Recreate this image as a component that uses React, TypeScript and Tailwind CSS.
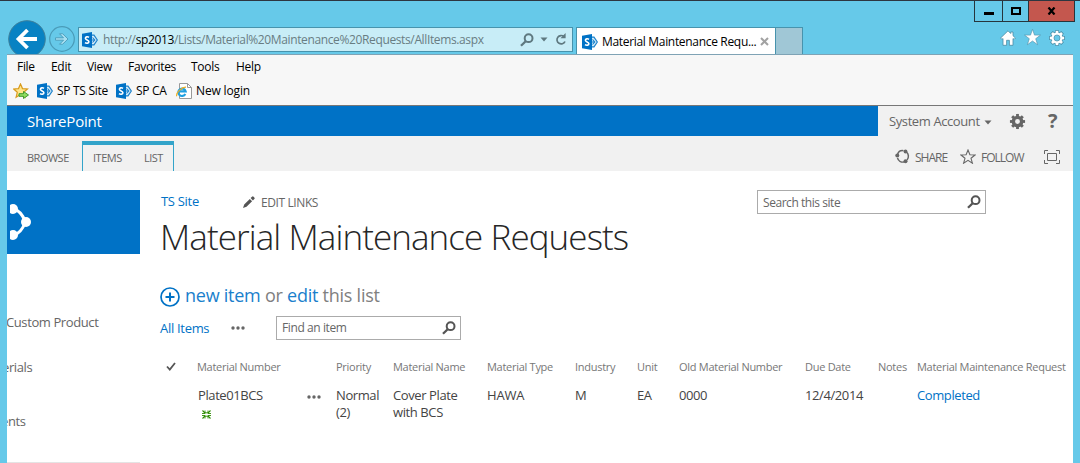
import React from "react";

function SharePointIcon() {
  return (
    <svg width="16" height="16" viewBox="0 0 16 16" className="shrink-0">
      <path d="M9 3.200h3L15.300 8 12 12.800H9z" fill="#d6ecf8" stroke="#1b82cc" strokeWidth="1.200" />
      <path d="M8 8h5M10.500 5.500 12.800 8l-2.300 2.500" fill="none" stroke="#1b82cc" strokeWidth="1.100" />
      <path d="M0 1.800 10 0v16L0 14.200z" fill="#0072c6" />
      <path d="M7 5.400C5.700 4.500 3.400 4.600 3.400 6.200c0 1.900 3.500 1.500 3.500 3.500 0 1.700-2.500 1.900-3.900.9" fill="none" stroke="#fff" strokeWidth="1.600" />
    </svg>
  );
}

function SearchIcon() {
  return (
    <svg width="14" height="14" viewBox="0 0 14 14" className="shrink-0">
      <circle cx="8.600" cy="5.200" r="3.900" fill="none" stroke="currentColor" strokeWidth="2" />
      <path d="M5.700 8.200 1 12.800" stroke="currentColor" strokeWidth="2.300" />
    </svg>
  );
}

function Gear({ size, hole, outline }: { size: number; hole: number; outline?: string }) {
  const angles = [0, 45, 90, 135, 180, 225, 270, 315];
  return (
    <svg width={size} height={size} viewBox="0 0 18 18" className="shrink-0">
      {outline && (
        <g fill={outline} stroke={outline} strokeWidth="1.600">
          {angles.map((a) => (
            <path key={a} d="M7.600 1h2.800v4H7.600z" transform={`rotate(${a} 9 9)`} />
          ))}
          <circle cx="9" cy="9" r="6.200" />
        </g>
      )}
      {angles.map((a) => (
        <path key={a} d="M7.500 1h3v4h-3z" fill="currentColor" transform={`rotate(${a} 9 9)`} />
      ))}
      <circle cx="9" cy="9" r={(hole + 6.2) / 2} fill={outline ? "#66c9e9" : "none"} stroke="currentColor" strokeWidth={6.2 - hole} />
      {outline && <circle cx="9" cy="9" r={hole} fill="none" stroke={outline} strokeWidth="0.800" />}
    </svg>
  );
}

function Dots() {
  return (
    <svg width="14" height="4" viewBox="0 0 14 4" fill="#666" className="shrink-0">
      <circle cx="2" cy="2" r="1.700" />
      <circle cx="7" cy="2" r="1.700" />
      <circle cx="12" cy="2" r="1.700" />
    </svg>
  );
}

function BrowserBar() {
  return (
    <header className="flex h-[54px] shrink-0 items-start overflow-hidden border-t border-[#2d3640]">
      <svg width="70" height="54" viewBox="0 1 70 54" className="ml-[6px] shrink-0">
        <circle cx="21" cy="39" r="18.300" fill="#0882c3" stroke="#3c7f9b" strokeWidth="1" />
        <path d="M31 39H13M21.500 30 12.500 39l9 9" fill="none" stroke="#fff" strokeWidth="3.800" />
        <circle cx="56" cy="39" r="12.300" fill="none" stroke="#4a9bb8" strokeWidth="1.200" />
        <path d="M49.500 37.800h8l-4-4h3.200l5.300 5.200-5.300 5.200h-3.200l4-4h-8z" fill="#a8e0f2" stroke="#4a9bb8" strokeWidth="0.900" />
      </svg>
      <div className="mt-[26px] ml-[2px] flex h-[25px] w-[495px] shrink-0 items-center border border-[#4793ad] bg-[#c8edf7] pr-[5px] pl-[3px] text-[#5f7980]">
        <SharePointIcon />
        <span className="mt-px ml-[5px] text-[12px] tracking-[-0.37px] whitespace-nowrap text-[#687d83]">
          http://<span className="text-black">sp2013</span>/Lists/Material%20Maintenance%20Requests/AllItems.aspx
        </span>
        <span className="ml-auto flex items-center">
          <SearchIcon />
          <svg width="8" height="5" viewBox="0 0 8 5" className="ml-[6px]"><path d="M.5.500h7L4 4.500z" fill="currentColor" /></svg>
          <svg width="12" height="13" viewBox="0 0 12 13" className="ml-[7px]">
            <path d="M9 3.600A4.200 4.200 0 1 0 10 8.500" fill="none" stroke="currentColor" strokeWidth="1.700" />
            <path d="M10.600 0v5.200H5.500z" fill="currentColor" />
          </svg>
        </span>
      </div>
      <div className="mt-[26px] ml-[3px] flex h-[28px] w-[200px] shrink-0 items-center border border-b-0 border-[#4793ad] bg-white pr-[6px] pl-[5px]">
        <SharePointIcon />
        <span className="ml-[4px] text-[12px] tracking-[-0.32px] whitespace-nowrap text-black">Material Maintenance Requ...</span>
        <svg width="9" height="9" viewBox="0 0 9 9" className="ml-auto"><path d="m1 1 7 7M8 1 1 8" stroke="#a2a2a2" strokeWidth="2" /></svg>
      </div>
      <div className="mt-[26px] h-[28px] w-[27px] shrink-0 border border-b-0 border-l-0 border-[#4793ad] bg-[#a0c7d6]" />
      <div className="ml-auto flex flex-col items-end pr-[5px]">
        <div className="flex h-[21px] w-[101px] border border-t-0 border-[#26353c]">
          <div className="flex w-[28px] items-center justify-center border-r border-[#26353c]"><span className="mt-[5px] h-[3px] w-[10px] bg-black" /></div>
          <div className="flex w-[26px] items-center justify-center border-r border-[#26353c]"><span className="h-[8px] w-[10px] border-2 border-black" /></div>
          <div className="flex flex-1 items-center justify-center bg-[#c4574e]">
            <svg width="9" height="8" viewBox="0 0 9 8"><path d="m1.500.5 6 7m0-7-6 7" stroke="#000" strokeWidth="2.200" /></svg>
          </div>
        </div>
        <div className="mt-[7px] mr-[10px] flex items-center gap-[8px] text-white">
          <svg width="16" height="16" viewBox="0 0 16 16">
            <path d="M8 .8.600 8l1.400 1.400 1-.9V15.300h3.600v-5h2.800v5H13V8.500l1 .9L15.400 8 13 5.700V2h-2.300v1.500z" fill="#fff" stroke="#4a8ca5" strokeWidth=".8" />
          </svg>
          <svg width="17" height="17" viewBox="0 0 17 17">
            <path d="m8.500.3 2 5.800h6l-4.800 3.600 1.900 6-5.100-3.700-5.100 3.700 1.900-6L.5 6.100h6z" fill="#fff" stroke="#4a8ca5" strokeWidth=".6" />
          </svg>
          <Gear size={16} hole={3.400} outline="#4a8ca5" />
        </div>
      </div>
    </header>
  );
}

function Toolbars() {
  return (
    <div className="h-[52px] shrink-0 border-t border-b border-t-[#7fa3b5] border-b-[#777] bg-[#f7f7f7] text-[12px] text-black">
      <nav className="flex h-[23px] items-center pl-[10px] tracking-[-0.3px] whitespace-nowrap">
        <span className="w-[34px]">File</span>
        <span className="w-[36px]">Edit</span>
        <span className="w-[41px]">View</span>
        <span className="w-[63px]">Favorites</span>
        <span className="w-[45px]">Tools</span>
        <span>Help</span>
      </nav>
      <div className="flex h-[26px] items-center pl-[6px] tracking-[-0.3px] whitespace-nowrap">
        <svg width="16" height="16" viewBox="0 0 16 16" className="mr-[8px] shrink-0">
          <path d="m7.500 1 2 4.600 5 .4-3.800 3.300 1.200 5-4.400-2.700-4.400 2.700 1.200-5L.7 6l4.800-.4z" fill="#ffe58a" stroke="#d89a1c" strokeWidth="1.200" />
          <path d="M6 10.700h4.500V8.500l5 3.500-5 3.500v-2.200H6z" fill="#8fdc60" stroke="#3f9a2d" strokeWidth="1" />
        </svg>
        <SharePointIcon />
        <span className="ml-[4px] w-[59px]">SP TS Site</span>
        <SharePointIcon />
        <span className="ml-[4px] w-[40px]">SP CA</span>
        <svg width="16" height="16" viewBox="0 0 16 16" className="shrink-0">
          <path d="M3.500.5h8l4 4v11h-12z" fill="#fff" stroke="#999" />
          <path d="M11.500.5v4h4" fill="none" stroke="#999" />
          <path d="M9.300 11A3.700 3.700 0 1 1 9.600 8.300H3" fill="none" stroke="#1fa0e0" strokeWidth="2.200" />
          <path d="M.8 13.300C-.5 10 6 4 10 4.200" fill="none" stroke="#f0b020" strokeWidth="1.200" />
        </svg>
        <span className="ml-[4px] tracking-[-0.15px]">New login</span>
      </div>
    </div>
  );
}

function SuiteBar() {
  return (
    <div className="flex h-[30px] shrink-0 bg-[#f1f1f1] text-[#666]">
      <div className="flex w-[871px] items-center bg-[#0072c6] pl-[20px] text-[15px] tracking-[-0.2px] text-white">SharePoint</div>
      <div className="flex flex-1 items-center pl-[11px]">
        <span className="mt-[2px] w-[95px] text-[13px] tracking-[-0.4px] whitespace-nowrap">System Account</span>
        <svg width="8" height="5" viewBox="0 0 8 5" className="mt-[2px] shrink-0"><path d="M.5.500h7L4 4.500z" fill="#666" /></svg>
        <span className="ml-[17px]"><Gear size={17} hole={2.600} /></span>
        <span className="ml-[22px] text-[20px] leading-none font-bold">?</span>
      </div>
    </div>
  );
}

function Ribbon() {
  return (
    <div className="flex h-[35px] shrink-0 items-end bg-[#f1f1f1] text-[11px] whitespace-nowrap text-[#666]">
      <div className="flex h-[26px] w-[75px] items-center pl-[20px] tracking-[-0.5px]">BROWSE</div>
      <div className="flex h-[30px] w-[92px] items-center border-x border-t-4 border-[#33a4ca] pl-[10px] tracking-[-0.5px]">
        <span className="w-[51px]">ITEMS</span>
        <span>LIST</span>
      </div>
      <div className="ml-auto flex h-[29px] items-center pr-[13px] text-[12px] tracking-[-1px]">
        <svg width="15" height="15" viewBox="0 0 15 15" className="mr-[5px]">
          <g fill="none" stroke="#666" strokeWidth="1.500">
            <path d="M2.500 5.500A5.500 5.500 0 0 1 8.500 1.700" />
            <path d="M11.500 3A5.700 5.700 0 0 1 12 11" />
            <path d="M9 13a5.700 5.700 0 0 1-6.500-4" />
          </g>
          <circle cx="2.300" cy="6.500" r="2" fill="#666" />
          <circle cx="10.500" cy="2.500" r="1.900" fill="#666" />
          <circle cx="10.500" cy="12.300" r="2" fill="#666" />
        </svg>
        <span className="mt-[2px] w-[45px]">SHARE</span>
        <svg width="16" height="15" viewBox="0 0 16 15" className="mr-[5px]">
          <path d="m8 1 1.900 4.700 5.100.3-4 3.300 1.400 4.900L8 11.400l-4.400 2.800L5 9.300 1 6l5.100-.3z" fill="none" stroke="#666" strokeWidth="1.100" />
        </svg>
        <span className="mt-[2px] w-[63px]">FOLLOW</span>
        <svg width="16" height="14" viewBox="0 0 16 14" fill="none" stroke="#666">
          <path d="M.5 4V.5H4M12 .5h3.500V4M15.500 10v3.500H12M4 13.500H.5V10M3.500 3.500h9v7h-9z" />
        </svg>
      </div>
    </div>
  );
}

function Sidebar() {
  return (
    <aside className="w-[133px] shrink-0 overflow-hidden pt-[19px] text-[13px] tracking-[-0.4px] whitespace-nowrap text-[#666]">
      <div className="flex h-[64px] items-center bg-[#0072c6] pl-[3px]">
        <svg width="22" height="38" viewBox="0 0 22 38" fill="#fff">
          <circle cx="3" cy="6" r="5" />
          <circle cx="16" cy="19" r="5" />
          <circle cx="3" cy="32" r="5" />
          <path d="M4 6q7 2 11 12M4 32q7-2 11-12" fill="none" stroke="#fff" strokeWidth="3" />
        </svg>
      </div>
      <div className="mt-[58px] -ml-px h-[20px] leading-[20px]">Custom Product</div>
      <div className="mt-[25px] -ml-[5px] h-[20px] leading-[20px]">erials</div>
      <div className="mt-[34px] -ml-[6px] h-[20px] leading-[20px]">ents</div>
      <div className="mt-[31px] h-px bg-[#e4e4e4]" />
    </aside>
  );
}

function ItemsTable() {
  return (
    <table className="mt-[16px] w-[906px] table-fixed text-left align-top text-[13px] leading-[17px] tracking-[-0.4px] whitespace-nowrap text-[#444]">
      <colgroup>
        <col className="w-[37px]" />
        <col className="w-[109px]" />
        <col className="w-[30px]" />
        <col className="w-[57px]" />
        <col className="w-[94px]" />
        <col className="w-[88px]" />
        <col className="w-[62px]" />
        <col className="w-[42px]" />
        <col className="w-[126px]" />
        <col className="w-[73px]" />
        <col className="w-[39px]" />
        <col className="w-[149px]" />
      </colgroup>
      <thead className="text-[11px] tracking-[-0.28px] text-[#777]">
        <tr className="h-[20px] [&>th]:p-0 [&>th]:font-normal">
          <th>
            <svg width="10" height="9" viewBox="0 0 10 9" className="ml-[6px]"><path d="m1 4.500 2.800 3L9 1" fill="none" stroke="#555" strokeWidth="1.800" /></svg>
          </th>
          <th>Material Number</th>
          <th />
          <th>Priority</th>
          <th>Material Name</th>
          <th>Material Type</th>
          <th>Industry</th>
          <th>Unit</th>
          <th>Old Material Number</th>
          <th>Due Date</th>
          <th>Notes</th>
          <th>Material Maintenance Request</th>
        </tr>
      </thead>
      <tbody>
        <tr className="align-top [&>td]:px-0 [&>td]:pt-[11px]">
          <td />
          <td>
            <span className="ml-px">Plate01BCS</span>
            <svg width="9" height="9" viewBox="0 0 9 9" className="mt-[6px] ml-[5px] block" fill="none" stroke="#2c8c00">
              <path d="M.5.500 3 3M8.500.5 6 3M.5 8.500 3 6M8.500 8.500 6 6" strokeWidth="1.100" />
              <path d="M0 3.500h3v-3M6 .5v3h3M0 5.500h3v3M6 8.500v-3h3M3 2.800h3M3 6.200h3" strokeWidth="0.900" />
            </svg>
          </td>
          <td><div className="ml-px flex h-[17px] items-center pt-[2px]"><Dots /></div></td>
          <td>Normal<br />(2)</td>
          <td>Cover Plate<br />with BCS</td>
          <td className="tracking-[-0.2px]">HAWA</td>
          <td>M</td>
          <td>EA</td>
          <td>0000</td>
          <td>12/4/2014</td>
          <td />
          <td className="text-[#0072c6]">Completed</td>
        </tr>
      </tbody>
    </table>
  );
}

function ListPage() {
  return (
    <main className="min-w-0 flex-1 pl-[20px] whitespace-nowrap">
      <div className="flex h-[45px]">
        <div className="flex h-[62px] items-center">
          <span className="w-[83px] pl-px text-[13px] tracking-[-0.3px] text-[#0072c6]">TS Site</span>
          <svg width="12" height="12" viewBox="0 0 12 12" className="mr-[6px]" fill="#555">
            <path d="M0 12 1.200 8.500l5.600-5.600 2.300 2.300-5.600 5.600zM7.600 2.100 9 .7q.8-.8 1.600 0l.7.700q.8.8 0 1.600L9.900 4.400z" />
          </svg>
          <span className="mt-[2px] text-[12px] tracking-[-0.4px] text-[#666]">EDIT LINKS</span>
        </div>
        <div className="mt-[19px] mr-[87px] ml-auto flex h-[24px] w-[229px] items-center justify-between border border-[#ababab] pr-[4px] pl-[5px] text-[#555]">
          <span className="mt-px text-[12px] tracking-[-0.45px] text-[#666]">Search this site</span>
          <SearchIcon />
        </div>
      </div>
      <h1 className="h-[44px] text-[35px] leading-[42px] font-light tracking-[-0.92px] text-[#262626]">Material Maintenance Requests</h1>
      <div className="mt-[24px] flex h-[24px] items-center text-[18px] tracking-[-0.25px] text-[#808080]">
        <svg width="20" height="20" viewBox="0 0 20 20" className="mt-[2px] mr-[5px]" fill="none" stroke="#0072c6">
          <circle cx="10" cy="10" r="9" strokeWidth="1.700" />
          <path d="M10 5.500v9M5.500 10h9" strokeWidth="2" />
        </svg>
        <span className="-mt-[2px] whitespace-pre"><span className="text-[#1a80cc]">new item</span> or <span className="text-[#1a80cc]">edit</span> this list</span>
      </div>
      <div className="mt-[8px] flex h-[24px] items-center">
        <span className="mt-px w-[71px] text-[13px] tracking-[-0.3px] text-[#0072c6]">All Items</span>
        <Dots />
        <div className="ml-[31px] flex h-[24px] w-[185px] items-center justify-between border border-[#ababab] pr-[4px] pl-[5px] text-[#555]">
          <span className="text-[12px] tracking-[-0.4px] text-[#666]">Find an item</span>
          <SearchIcon />
        </div>
      </div>
      <ItemsTable />
    </main>
  );
}

export default function App() {
  return (
    <div className="flex h-[463px] w-[1080px] flex-col overflow-hidden bg-[#66c9e9] font-['Open_Sans','Noto_Sans',sans-serif]">
      <BrowserBar />
      <div className="mr-[7px] ml-[7px] flex min-h-0 flex-1 flex-col bg-white">
        <Toolbars />
        <SuiteBar />
        <Ribbon />
        <div className="flex min-h-0 flex-1 overflow-hidden">
          <Sidebar />
          <ListPage />
        </div>
      </div>
    </div>
  );
}
